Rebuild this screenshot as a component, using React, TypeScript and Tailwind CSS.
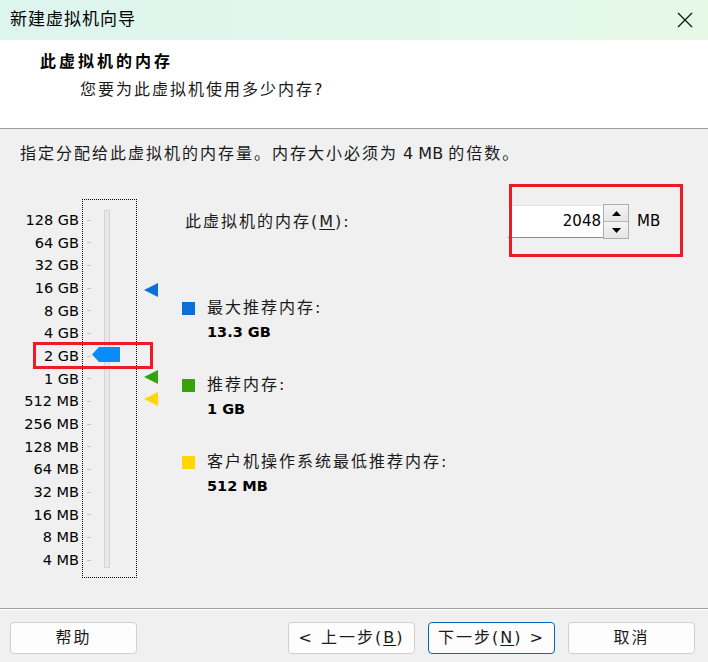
import React from "react";

const scale = [
	"128 GB", "64 GB", "32 GB", "16 GB", "8 GB", "4 GB", "2 GB", "1 GB",
	"512 MB", "256 MB", "128 MB", "64 MB", "32 MB", "16 MB", "8 MB", "4 MB",
];

const zh = "text-[16px] tracking-[2px]";

function Marker({ color, top }: { color: string; top: string }) {
	return (
		<svg className={`absolute left-0 ${top}`} width="14" height="14" viewBox="0 0 14 14">
			<polygon points="0,7 14,0 14,14" fill={color} />
		</svg>
	);
}

function Legend({ color, label, value }: { color: string; label: string; value: string }) {
	return (
		<div className="flex flex-col">
			<div className="flex items-center h-[24px]">
				<div className={`w-[13px] h-[13px] ${color}`} />
				<span className={`ml-[12px] text-[#1a1a1a] ${zh}`}>{label}</span>
			</div>
			<div className="h-[24px] leading-[24px] pl-[25px] font-bold text-[14.5px] text-black">{value}</div>
		</div>
	);
}

function Btn({ children, active }: { children: React.ReactNode; active?: boolean }) {
	return (
		<button
			className={`w-[127px] h-[32px] rounded-[4px] bg-[#fdfdfd] border flex items-center justify-center text-[#1a1a1a] ${zh} ${
				active ? "border-[#0067c0]" : "border-[#d0d0d0]"
			}`}
		>
			{children}
		</button>
	);
}

export default function App() {
	return (
		<div
			className="relative w-[708px] h-[662px] bg-[#f0f0f0] flex flex-col overflow-hidden"
			style={{ fontFamily: '"DejaVu Sans", "Noto Sans CJK SC", sans-serif' }}
		>
			{/* title bar */}
			<div className="h-[40px] shrink-0 bg-gradient-to-r from-[#ddf5ef] to-[#e6f9e7] flex items-center justify-between pl-[10px] pr-[15px]">
				<span className="text-[17px] tracking-[1px] text-black">新建虚拟机向导</span>
				<svg width="16" height="16" viewBox="0 0 16 16">
					<path d="M1 1 L15 15 M15 1 L1 15" stroke="#1a1a1a" strokeWidth="1.4" />
				</svg>
			</div>

			{/* header */}
			<div className="h-[89px] shrink-0 bg-white border-b border-[#a0a0a0] pl-[40px] pt-[10px]">
				<div className="h-[24px] leading-[24px] text-[16px] tracking-[3px] font-bold text-black">此虚拟机的内存</div>
				<div className={`mt-[4px] pl-[40px] h-[24px] leading-[24px] text-[#1a1a1a] ${zh}`}>您要为此虚拟机使用多少内存?</div>
			</div>

			{/* body */}
			<div className="flex-1 flex flex-col pt-[13px]">
				<div className={`pl-[20px] h-[24px] leading-[24px] text-[#1a1a1a] ${zh}`}>
					指定分配给此虚拟机的内存量。内存大小必须为<span className="tracking-normal"> 4 MB </span>的倍数。
				</div>

				<div className="mt-[33px] flex">
					{/* labels */}
					<div className="w-[79px] flex flex-col pt-[10px]">
						{scale.map((s) => (
							<div key={s} className="h-[22.67px] leading-[22.67px] text-right text-[14.5px] text-black whitespace-nowrap">
								{s}
							</div>
						))}
					</div>

					{/* slider */}
					<div className="relative ml-[3px] w-[55px] h-[379px] border border-dotted border-black">
						<div className="flex flex-col pt-[9px]">
							{scale.map((s) => (
								<div key={s} className="h-[22.67px] flex items-center pl-[4px]">
									<div className="w-[4px] h-[1px] bg-[#c4c4c4]" />
								</div>
							))}
						</div>
						<div className="absolute left-[21px] top-[10px] w-[6px] h-[358px] bg-[#e8e8e8] border border-[#d2d6d3]" />
						<svg className="absolute left-[9px] top-[147px]" width="28" height="15" viewBox="0 0 28 15">
							<polygon points="0,7.5 7,0 28,0 28,15 7,15" fill="#0a8cf7" />
						</svg>
					</div>

					{/* markers */}
					<div className="relative ml-[7px] w-[14px] h-[379px]">
						<Marker color="#0a6fd6" top="top-[84px]" />
						<Marker color="#36a30c" top="top-[171px]" />
						<Marker color="#ffd700" top="top-[193px]" />
					</div>

					{/* right panel */}
					<div className="ml-[24px] flex flex-col">
						<div className="flex items-center mt-[5px] h-[35px]">
							<div className={`w-[326px] pl-[3px] text-[#1a1a1a] ${zh}`}>
								此虚拟机的内存(<span className="underline underline-offset-2">M</span>):
							</div>
							<div className="w-[95px] h-[33px] bg-white border-t border-[#e3e3e3] border-b border-b-[#8a8a8a] flex items-center justify-end pr-[2px] text-[15px] text-black">
								2048
							</div>
							<div className="w-[26px] h-[35px] border border-[#adadad] flex flex-col">
								<div className="flex-1 bg-gradient-to-b from-[#f4f4f4] to-[#e6e6e6] border-b border-[#b8b8b8] flex items-center justify-center">
									<svg width="9" height="5" viewBox="0 0 9 5"><polygon points="4.5,0 9,5 0,5" fill="#000" /></svg>
								</div>
								<div className="flex-1 bg-gradient-to-b from-[#f4f4f4] to-[#e6e6e6] flex items-center justify-center">
									<svg width="9" height="5" viewBox="0 0 9 5"><polygon points="0,0 9,0 4.5,5" fill="#000" /></svg>
								</div>
							</div>
							<span className="ml-[8px] text-[15px] text-black">MB</span>
						</div>

						<div className="mt-[57px] flex flex-col gap-[29px]">
							<Legend color="bg-[#0a6fd6]" label="最大推荐内存:" value="13.3 GB" />
							<Legend color="bg-[#36a30c]" label="推荐内存:" value="1 GB" />
							<Legend color="bg-[#ffd700]" label="客户机操作系统最低推荐内存:" value="512 MB" />
						</div>
					</div>
				</div>
			</div>

			{/* footer */}
			<div className="h-[54px] shrink-0 border-t border-[#a0a0a0]">
				<div className="h-full border-t border-white flex items-start pt-[12px] pl-[10px] pr-[13px]">
					<Btn>帮助</Btn>
					<div className="ml-auto flex gap-[13px]">
						<Btn>&lt; 上一步(<span className="underline underline-offset-2">B</span>)</Btn>
						<Btn active>下一步(<span className="underline underline-offset-2">N</span>) &gt;</Btn>
						<Btn>取消</Btn>
					</div>
				</div>
			</div>

			{/* red annotation boxes */}
			<div className="absolute left-[33px] top-[342px] w-[120px] h-[27px] border-[3px] border-[#ec1c24]" />
			<div className="absolute left-[509px] top-[184px] w-[174px] h-[73px] border-[3px] border-[#ec1c24]" />
		</div>
	);
}
